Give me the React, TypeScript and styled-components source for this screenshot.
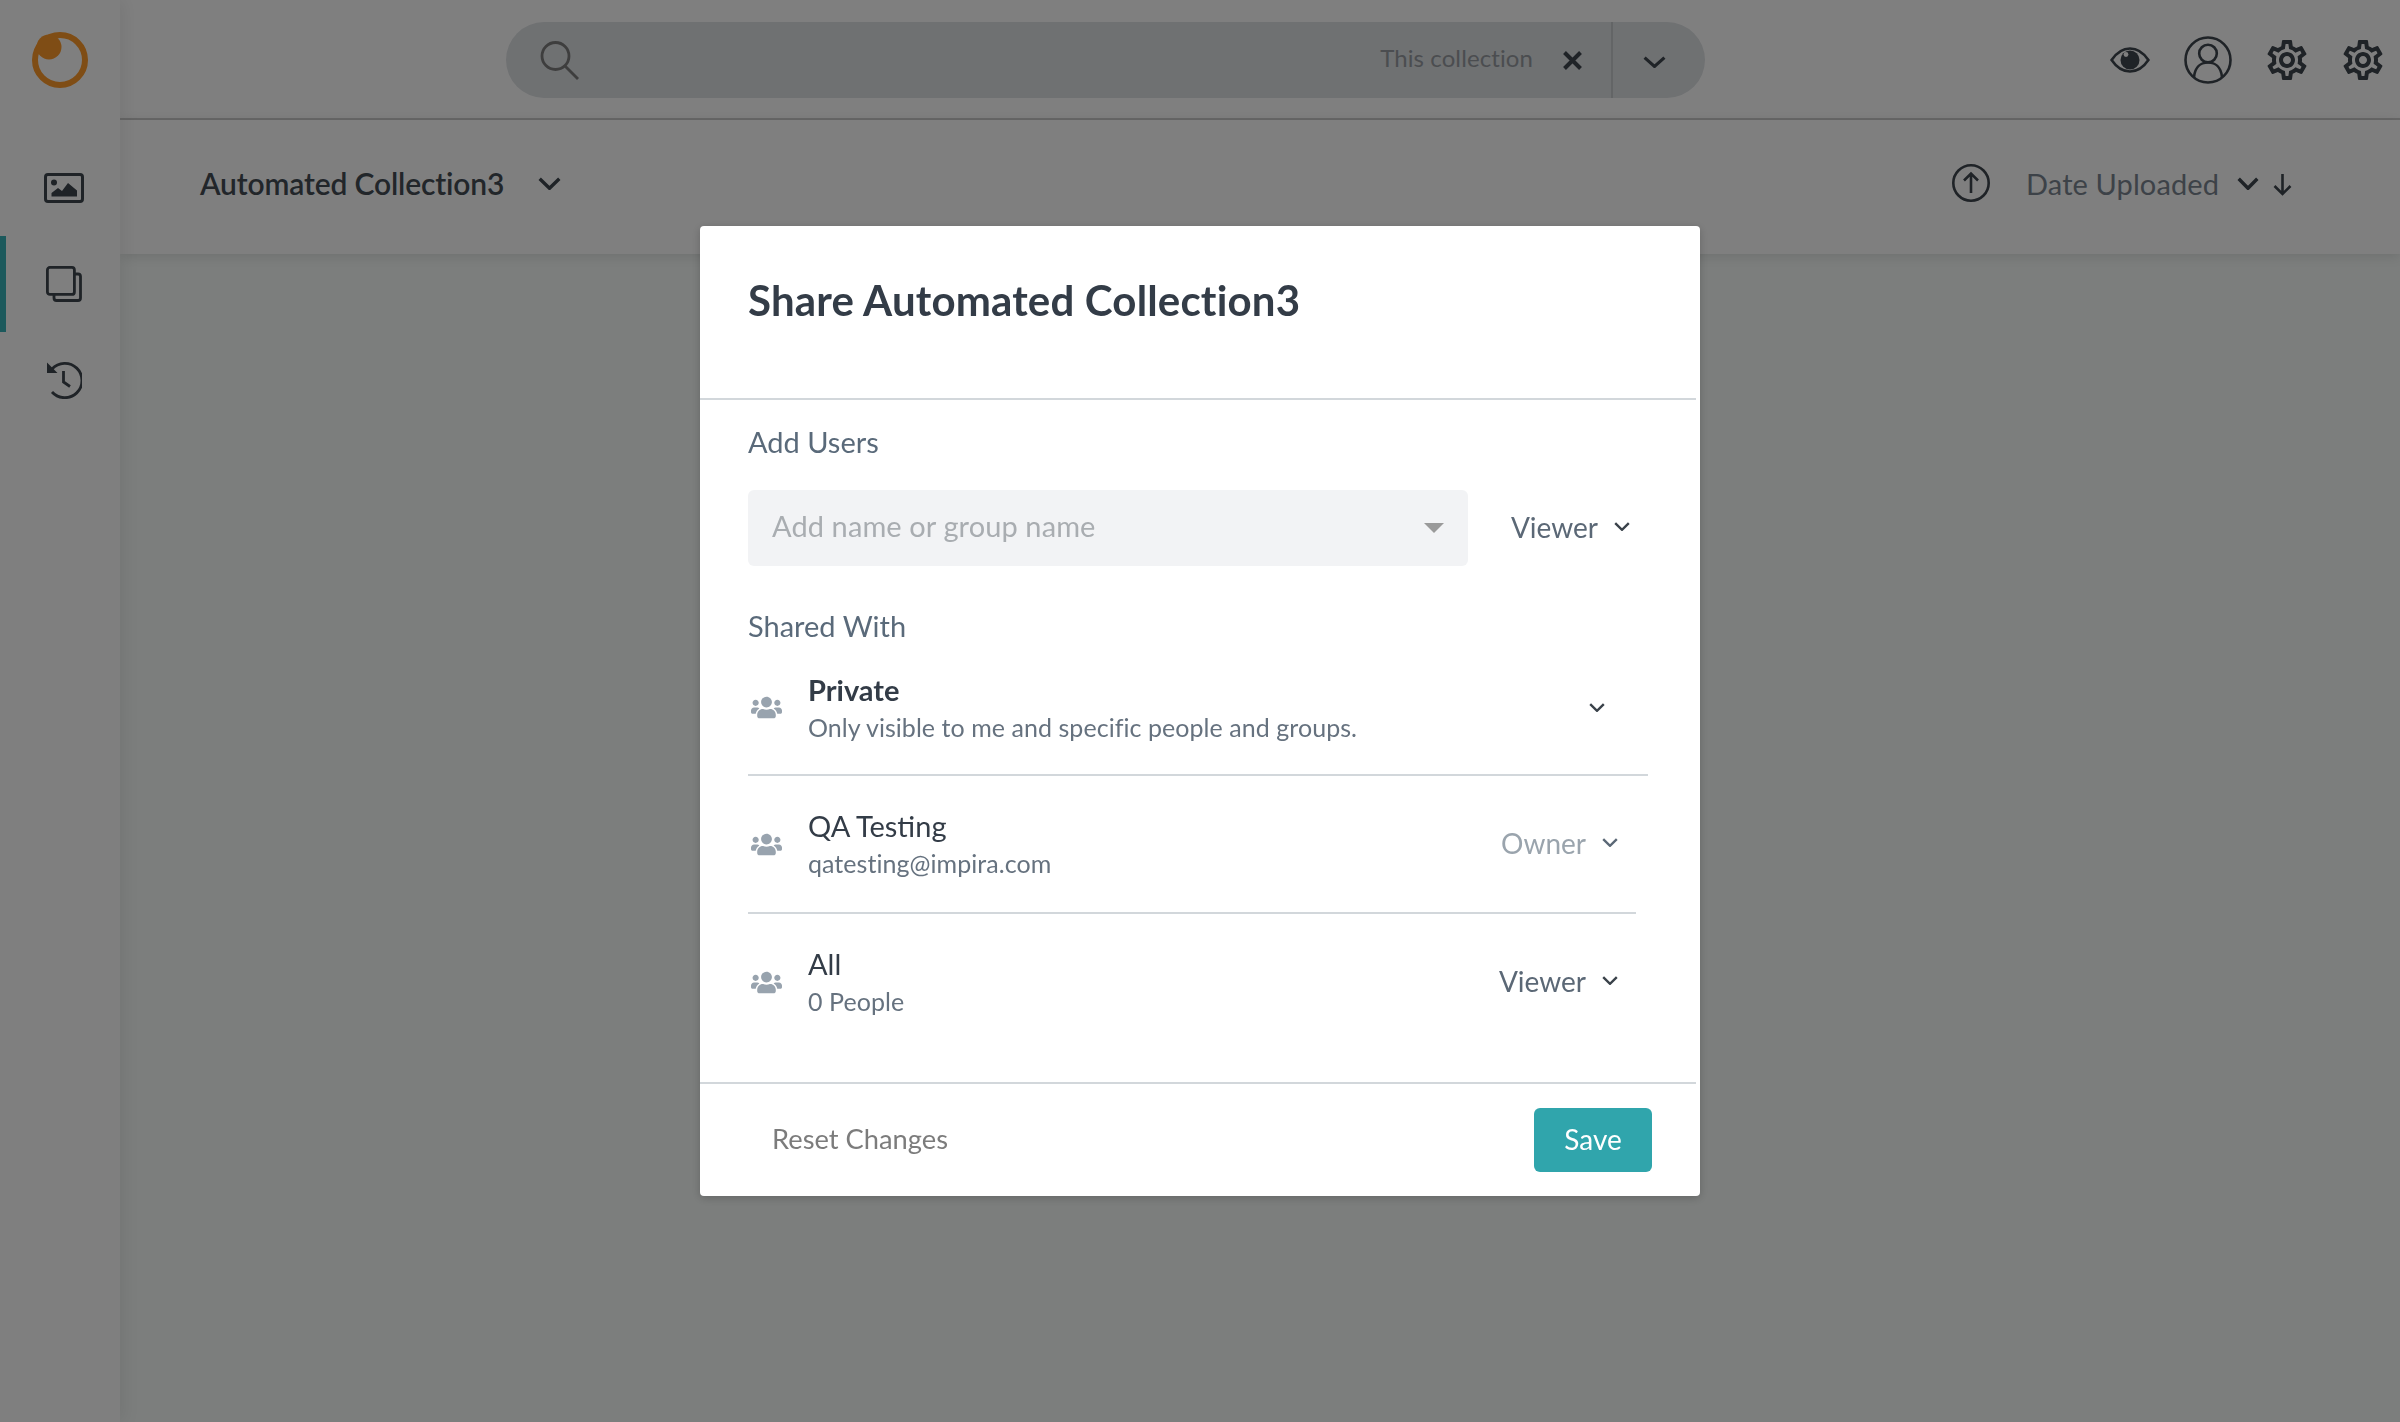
import React from "react";
import styled, { createGlobalStyle } from "styled-components";
import { FaUsers } from "react-icons/fa";
import { MdOutlineSettings } from "react-icons/md";

const GlobalStyle = createGlobalStyle`
  html, body {
    margin: 0;
    padding: 0;
    height: 100%;
    font-family: Lato, "Open Sans", sans-serif;
    background: #f8fcfa;
  }
  * { box-sizing: border-box; }
`;

const Chevron = ({ w = 22, h = 12, sw = 3.2, color = "currentColor" }: { w?: number; h?: number; sw?: number; color?: string }) => (
  <svg width={w} height={h} viewBox={`0 0 ${w} ${h}`} fill="none">
    <path d={`M${sw / 2} ${sw / 2} L${w / 2} ${h - sw / 2} L${w - sw / 2} ${sw / 2}`} stroke={color} strokeWidth={sw} />
  </svg>
);

const ImageIcon = () => (
  <svg width="40" height="30" viewBox="0 0 40 30" fill="none">
    <rect x="1.5" y="1.5" width="37" height="27" rx="2.5" stroke="#3e464e" strokeWidth="3" />
    <circle cx="10" cy="9.5" r="3" fill="#3e464e" />
    <path d="M7.5 23.5 V20 L14 15 L18 18 L24 10 L33 17.5 V23.5 Z" fill="#3e464e" />
  </svg>
);

const CopyIcon = () => (
  <svg width="36" height="36" viewBox="0 0 36 36" fill="none" stroke="#3e464e" strokeWidth="2.8">
    <rect x="1.4" y="1.4" width="27" height="27" rx="2.5" />
    <path d="M29 8 h3 a2.5 2.5 0 0 1 2.5 2.5 V32 a2.5 2.5 0 0 1 -2.5 2.5 H10.5 A2.5 2.5 0 0 1 8 32 v-3" />
  </svg>
);

const HistoryIcon = () => (
  <svg width="36" height="38" viewBox="0 0 36 38" fill="none">
    <path d="M6 8 A17.2 17.2 0 1 1 6 31" stroke="#3e464e" strokeWidth="2.8" />
    <path d="M1 1.5 L1 12 L11.5 12 Z" fill="#3e464e" />
    <path d="M17.5 10 V21 L24 25.5" stroke="#3e464e" strokeWidth="2.8" />
  </svg>
);

const Logo = () => (
  <svg width="56" height="56" viewBox="0 0 56 56" fill="none">
    <circle cx="28" cy="28" r="25" stroke="#ff9a2a" strokeWidth="6" />
    <circle cx="17" cy="15" r="12.5" fill="#ff9a2a" />
  </svg>
);

const SearchIcon = () => (
  <svg width="40" height="39" viewBox="0 0 40 39" fill="none" stroke="#7c7c7c" strokeWidth="2.8">
    <circle cx="15.5" cy="15" r="13.5" />
    <path d="M25 25 L38 38" />
  </svg>
);

const CrossIcon = () => (
  <svg width="19" height="19" viewBox="0 0 19 19" fill="none" stroke="#3e464e" strokeWidth="4">
    <path d="M1.5 1.5 L17.5 17.5 M17.5 1.5 L1.5 17.5" />
  </svg>
);

const EyeIcon = () => (
  <svg width="40" height="26" viewBox="0 0 40 26" fill="none">
    <path d="M1.6 13 C7 5 13 1.5 20 1.5 C27 1.5 33 5 38.4 13 C33 21 27 24.5 20 24.5 C13 24.5 7 21 1.6 13 Z" stroke="#3e464e" strokeWidth="2.6" />
    <circle cx="20" cy="13" r="9.5" fill="#3e464e" />
    <circle cx="16" cy="7.5" r="2.4" fill="#fff" />
  </svg>
);

const UserIcon = () => (
  <svg width="48" height="48" viewBox="0 0 48 48" fill="none" stroke="#3e464e" strokeWidth="2.6">
    <circle cx="24" cy="24" r="22.5" />
    <circle cx="24" cy="17.5" r="8.8" />
    <path d="M10 41 C11 31 17 26.5 24 26.5 C31 26.5 37 31 38 41" />
  </svg>
);

const UploadIcon = () => (
  <svg width="38" height="38" viewBox="0 0 38 38" fill="none" stroke="#3e464e" strokeWidth="2.6">
    <circle cx="19" cy="19" r="17.7" />
    <path d="M19 29 V10 M12 16.5 L19 9.5 L26 16.5" />
  </svg>
);

const ArrowDownIcon = () => (
  <svg width="19" height="22" viewBox="0 0 19 22" fill="none" stroke="#3e464e" strokeWidth="2.6">
    <path d="M9.5 0 V20 M1.5 12 L9.5 20 L17.5 12" />
  </svg>
);

const App = () => {
  return (
    <>
      <GlobalStyle />
      <Shell>
        <Sidebar>
          <LogoSlot>
            <Logo />
          </LogoSlot>
          <NavItem>
            <ImageIcon />
          </NavItem>
          <NavItem $active>
            <CopyIcon />
          </NavItem>
          <NavItem>
            <HistoryIcon />
          </NavItem>
        </Sidebar>
        <Main>
          <TopBar>
            <SearchBar>
              <SearchIcon />
              <ScopeLabel>This collection</ScopeLabel>
              <CrossIcon />
              <SearchMenu>
                <Chevron w={23} h={12} sw={3.2} color="#3e464e" />
              </SearchMenu>
            </SearchBar>
            <TopActions>
              <EyeIcon />
              <UserIcon />
              <GearIcon />
              <GearIcon />
            </TopActions>
          </TopBar>
          <SubHeader>
            <CollectionName>Automated Collection3</CollectionName>
            <Chevron w={23} h={13} sw={3.4} color="#3e464e" />
            <SortGroup>
              <UploadIcon />
              <SortLabel>Date Uploaded</SortLabel>
              <Chevron w={22} h={13} sw={3.4} color="#3e464e" />
              <SortArrow>
                <ArrowDownIcon />
              </SortArrow>
            </SortGroup>
          </SubHeader>
        </Main>
      </Shell>

      <Backdrop>
        <Modal>
          <ModalHeader>
            <ModalTitle>Share Automated Collection3</ModalTitle>
          </ModalHeader>
          <ModalBody>
            <SectionLabel>Add Users</SectionLabel>
            <AddRow>
              <SelectBox>
                <Placeholder>Add name or group name</Placeholder>
                <Caret />
              </SelectBox>
              <RolePicker $right={70}>
                Viewer
                <Chevron w={16} h={9} sw={2.4} color="#3a424a" />
              </RolePicker>
            </AddRow>
            <SectionLabel>Shared With</SectionLabel>
            <ShareRow $height={130} $lineEnd={52} $lift={5}>
              <GroupIcon />
              <ShareText>
                <ShareName $strong>Private</ShareName>
                <ShareDetail>Only visible to me and specific people and groups.</ShareDetail>
              </ShareText>
              <RowChevron>
                <Chevron w={16} h={9} sw={2.4} color="#3a424a" />
              </RowChevron>
            </ShareRow>
            <ShareRow $height={138} $lineEnd={64}>
              <GroupIcon />
              <ShareText>
                <ShareName>QA Testing</ShareName>
                <ShareDetail>qatesting@impira.com</ShareDetail>
              </ShareText>
              <RolePicker $right={18} $muted>
                Owner
                <Chevron w={16} h={9} sw={2.4} color="#5b6876" />
              </RolePicker>
            </ShareRow>
            <ShareRow $height={136} $lineEnd={64} $last>
              <GroupIcon />
              <ShareText>
                <ShareName>All</ShareName>
                <ShareDetail>0 People</ShareDetail>
              </ShareText>
              <RolePicker $right={18}>
                Viewer
                <Chevron w={16} h={9} sw={2.4} color="#3a424a" />
              </RolePicker>
            </ShareRow>
          </ModalBody>
          <ModalFooter>
            <ResetButton>Reset Changes</ResetButton>
            <SaveButton>Save</SaveButton>
          </ModalFooter>
        </Modal>
      </Backdrop>
    </>
  );
};

export default App;

const Shell = styled.div`
  display: flex;
  height: 1422px;
  overflow: hidden;
`;
const Sidebar = styled.nav`
  width: 120px;
  flex-shrink: 0;
  background: #fff;
  box-shadow: 4px 0 16px rgba(0, 0, 0, 0.07);
  position: relative;
  z-index: 2;
`;
const LogoSlot = styled.div`
  height: 140px;
  padding: 32px 0 0 32px;
`;
const NavItem = styled.div<{ $active?: boolean }>`
  height: 96px;
  display: flex;
  align-items: center;
  justify-content: center;
  padding-left: 2px;
  border-left: 6px solid ${({ $active }) => ($active ? "#38b3b9" : "transparent")};
`;
const Main = styled.main`
  flex: 1;
  min-width: 0;
`;
const TopBar = styled.header`
  height: 120px;
  display: flex;
  align-items: flex-start;
  background: #fff;
  border-bottom: 2px solid #d0d0d0;
  padding: 22px 16px 0 386px;
`;
const SearchBar = styled.div`
  width: 1199px;
  height: 76px;
  border-radius: 38px;
  background: #dfe2e5;
  display: flex;
  align-items: center;
  padding-left: 34px;
`;
const ScopeLabel = styled.span`
  margin-left: auto;
  margin-right: 30px;
  padding-bottom: 5px;
  font-size: 24px;
  color: #969ba0;
  letter-spacing: 0.1px;
`;
const SearchMenu = styled.div`
  width: 94px;
  height: 76px;
  margin-left: 29px;
  border-left: 2px solid #c6cacd;
  display: flex;
  align-items: center;
  justify-content: center;
  padding: 4px 9px 0 0;
`;
const TopActions = styled.div`
  margin-left: auto;
  height: 76px;
  display: flex;
  align-items: center;
  gap: 34px;
`;
const GearIcon = styled(MdOutlineSettings)`
  width: 48px;
  height: 48px;
  color: #3e464e;
  margin: 0 -3px;
`;
const SubHeader = styled.div`
  height: 134px;
  background: #fff;
  box-shadow: 0 2px 12px rgba(0, 0, 0, 0.12);
  display: flex;
  align-items: center;
  padding: 0 108px 8px 80px;
`;
const CollectionName = styled.span`
  font-size: 30px;
  font-weight: 600;
  letter-spacing: -0.15px;
  margin-right: 34px;
  color: #444c54;
`;
const SortGroup = styled.div`
  margin-left: auto;
  display: flex;
  align-items: center;
`;
const SortLabel = styled.span`
  font-size: 29px;
  letter-spacing: 0.1px;
  color: #7a8590;
  margin: 0 18px 0 36px;
`;
const SortArrow = styled.span`
  display: flex;
  margin: 4px 0 0 14px;
`;
const Backdrop = styled.div`
  position: fixed;
  inset: 0;
  z-index: 10;
  background: rgba(0, 0, 0, 0.5);
  display: flex;
  align-items: center;
  justify-content: center;
`;
const Modal = styled.div`
  width: 1000px;
  height: 970px;
  background: #fff;
  border-radius: 4px;
  box-shadow: 0 2px 10px rgba(0, 0, 0, 0.2);
  display: flex;
  flex-direction: column;
`;
const ModalHeader = styled.div`
  height: 174px;
  margin-right: 4px;
  padding: 46px 0 0 48px;
  border-bottom: 2px solid #d2d7db;
`;
const ModalTitle = styled.h2`
  margin: 0;
  font-size: 42px;
  line-height: 56px;
  font-weight: 700;
  letter-spacing: 0.17px;
  color: #333c47;
`;
const ModalBody = styled.div`
  flex: 1;
  padding: 22px 0 0 48px;
`;
const SectionLabel = styled.div`
  font-size: 29px;
  line-height: 40px;
  color: #5a6a7a;
`;
const AddRow = styled.div`
  display: flex;
  align-items: center;
  margin: 28px 0 40px;
`;
const SelectBox = styled.div`
  width: 720px;
  height: 76px;
  background: #f2f3f5;
  border-radius: 6px;
  display: flex;
  align-items: center;
  justify-content: space-between;
  padding: 0 24px;
`;
const Placeholder = styled.span`
  font-size: 29px;
  letter-spacing: 0.1px;
  padding-bottom: 6px;
  color: #a9adb1;
`;
const Caret = styled.span`
  width: 0;
  height: 0;
  border-left: 10px solid transparent;
  border-right: 10px solid transparent;
  border-top: 10px solid #9a9a9a;
`;
const RolePicker = styled.div<{ $right: number; $muted?: boolean }>`
  display: flex;
  align-items: center;
  gap: 16px;
  font-size: 28px;
  padding-bottom: 3px;
  color: ${({ $muted }) => ($muted ? "#9aa4ad" : "#5b6876")};
  margin-left: auto;
  margin-right: ${({ $right }) => $right}px;
`;
const ShareRow = styled.div<{ $height: number; $lineEnd: number; $last?: boolean; $lift?: number }>`
  height: ${({ $height }) => $height}px;
  display: flex;
  align-items: center;
  margin-right: ${({ $lineEnd }) => $lineEnd}px;
  padding-bottom: ${({ $lift }) => $lift ?? 0}px;
  border-bottom: ${({ $last }) => ($last ? "none" : "2px solid #d2d7db")};
`;
const GroupIcon = styled(FaUsers)`
  width: 31px;
  height: 25px;
  margin: 0 26px 0 3px;
  color: #98a3ae;
`;
const ShareText = styled.div`
  display: flex;
  flex-direction: column;
`;
const ShareName = styled.span<{ $strong?: boolean }>`
  font-size: 29px;
  line-height: 38px;
  font-weight: ${({ $strong }) => ($strong ? 700 : 400)};
  color: #333c47;
`;
const ShareDetail = styled.span`
  font-size: 25px;
  line-height: 36px;
  letter-spacing: 0.05px;
  color: #66727f;
`;
const RowChevron = styled.div`
  margin-left: auto;
  margin-right: 43px;
  display: flex;
`;
const ModalFooter = styled.div`
  height: 114px;
  margin-right: 4px;
  border-top: 2px solid #d2d7db;
  display: flex;
  align-items: center;
  justify-content: space-between;
  padding: 0 44px 0 72px;
`;
const ResetButton = styled.span`
  font-size: 27.3px;
  padding-bottom: 3px;
  color: #7c7c7c;
`;
const SaveButton = styled.button`
  width: 118px;
  height: 64px;
  border: none;
  border-radius: 6px;
  background: #30a5ac;
  color: #fff;
  font-family: inherit;
  font-size: 28px;
  padding: 0 0 3px;
`;
